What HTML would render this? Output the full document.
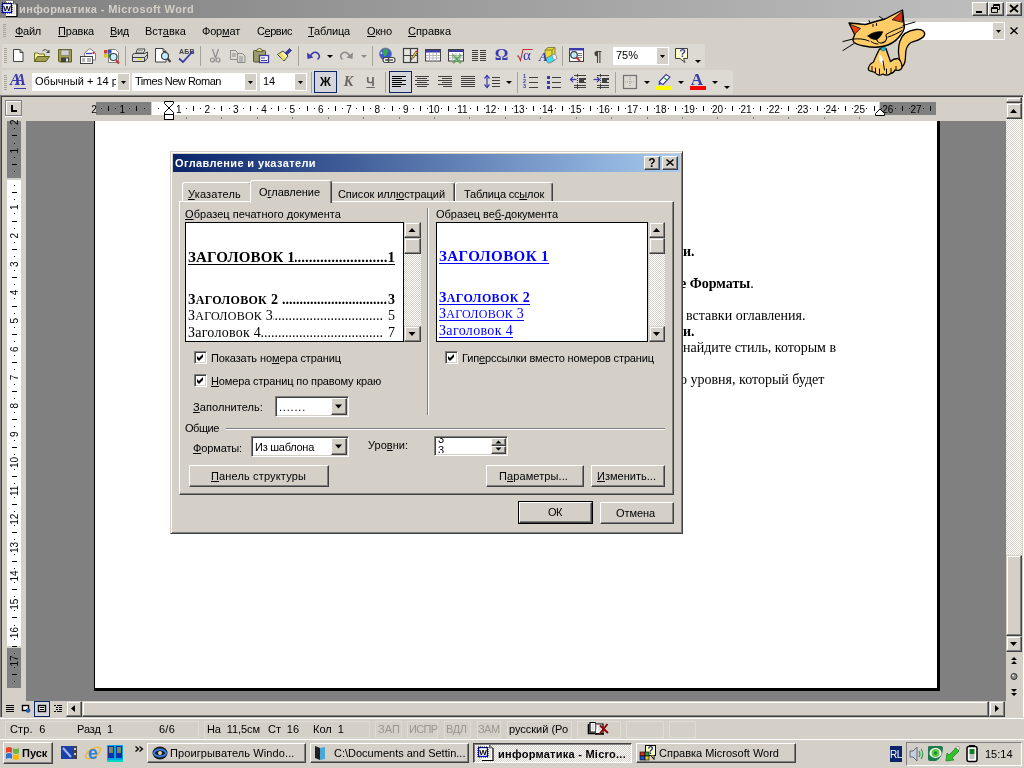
<!DOCTYPE html>
<html lang="ru">
<head>
<meta charset="utf-8">
<title>информатика - Microsoft Word</title>
<style>
*{box-sizing:border-box;margin:0;padding:0}
html,body{width:1024px;height:768px;overflow:hidden;background:#D4D0C8}
body{will-change:transform;position:relative;font-family:"Liberation Sans",sans-serif;font-size:11px;color:#000;line-height:1}
.a{position:absolute}
.t{position:absolute;white-space:nowrap;line-height:13px;height:13px}
u{text-decoration:underline;text-underline-offset:1px}
.btn{position:absolute;background:#D4D0C8;border:1px solid;border-color:#fff #404040 #404040 #fff;box-shadow:inset -1px -1px #808080,inset 1px 1px #D4D0C8;text-align:center;white-space:nowrap}
.sunk{position:absolute;background:#fff;border:1px solid;border-color:#808080 #fff #fff #808080;box-shadow:inset 1px 1px #404040,inset -1px -1px #D4D0C8}
.sb{position:absolute;background:#D4D0C8;border:1px solid;border-color:#D4D0C8 #404040 #404040 #D4D0C8;box-shadow:inset -1px -1px #808080,inset 1px 1px #fff}
.track{position:absolute;background-color:#fff;background-image:linear-gradient(45deg,#D4D0C8 25%,transparent 25%,transparent 75%,#D4D0C8 75%),linear-gradient(45deg,#D4D0C8 25%,transparent 25%,transparent 75%,#D4D0C8 75%);background-size:2px 2px;background-position:0 0,1px 1px}
.sep{position:absolute;width:1px;background:#A6A398}
.tb{position:absolute;background:#DDDAD3;border-radius:2px}
.serif{font-family:"Liberation Serif",serif}
.pan{position:absolute;top:721px;height:17px;border:1px solid #DFDCD5;}
.st{position:absolute;top:723px;white-space:nowrap;line-height:13px;font-size:11px}
.task{position:absolute;top:744px;height:20px;font-size:11px;line-height:18px;white-space:nowrap;overflow:hidden}
svg{position:absolute;overflow:visible}
</style>
</head>
<body>
<!-- title bar -->
<div class="a" style="left:0px;top:0px;width:1024px;height:18px;background:linear-gradient(90deg,#808080,#C0C0C0)"></div>
<svg style="left:1px;top:1px" width="18" height="18" viewBox="0 0 18 18"><g transform="translate(-1,-1)"><path d="M6 1h7.500l3 3v12h-10.500z" fill="#fff"/><path d="M13.500 1l3 3h-3z" fill="#D4D0C8" stroke="#000" stroke-width=".6"/><path d="M17 4v12.500h-11" fill="none" stroke="#000" stroke-width="1.200"/><path d="M12 7h3M12 9h3M12 11h3M8 13h7" stroke="#B8B8B8" stroke-width=".8"/></g><rect x="1" y="2" width="10" height="10" fill="#0000E0"/><rect x="1" y="2" width="10" height="10" fill="none" stroke="#000" stroke-width="1" stroke-dasharray="1 1"/><rect x="2.200" y="3.200" width="7.600" height="7.600" fill="#fff"/><text x="6" y="10" font-family="Liberation Sans,sans-serif" font-weight="bold" font-size="8" fill="#000" text-anchor="middle">W</text></svg>
<div class="t" style="left:19px;top:3px;font-weight:bold;color:#D4D0C8;font-size:11px;letter-spacing:0.382px;">информатика - Microsoft Word</div>
<div class="btn" style="left:972px;top:2px;width:16px;height:14px;"></div>
<div class="btn" style="left:988px;top:2px;width:16px;height:14px;"></div>
<div class="btn" style="left:1006px;top:2px;width:16px;height:14px;"></div>
<svg style="left:972px;top:2px" width="16" height="14" viewBox="0 0 16 14"><rect x="4" y="9" width="6" height="2" fill="#000"/></svg>
<svg style="left:988px;top:2px" width="16" height="14" viewBox="0 0 16 14"><path d="M5.5 2.5h6v5h-6z M5 3.5h7" fill="none" stroke="#000"/><path d="M3.5 5.5h6v5h-6z" fill="#D4D0C8" stroke="#000"/><path d="M3 6.5h7" stroke="#000"/></svg>
<svg style="left:1006px;top:2px" width="16" height="14" viewBox="0 0 16 14"><path d="M4 3l8 7M12 3l-8 7" stroke="#000" stroke-width="1.8" fill="none"/></svg>
<!-- menu bar -->
<div class="a" style="left:3px;top:24px;width:3px;height:14px;background:repeating-linear-gradient(180deg,#A6A398 0,#A6A398 1px,transparent 1px,transparent 2px)"></div>
<div class="t" style="left:15px;top:24px;top:24.5px;letter-spacing:-0.266px;"><u>Ф</u>айл</div>
<div class="t" style="left:58px;top:24px;top:24.5px;letter-spacing:-0.195px;"><u>П</u>равка</div>
<div class="t" style="left:110px;top:24px;top:24.5px;letter-spacing:-0.307px;"><u>В</u>ид</div>
<div class="t" style="left:145px;top:24px;top:24.5px;letter-spacing:0.013px;">Вст<u>а</u>вка</div>
<div class="t" style="left:202px;top:24px;top:24.5px;letter-spacing:-0.182px;">Фор<u>м</u>ат</div>
<div class="t" style="left:257px;top:24px;top:24.5px;letter-spacing:-0.448px;">С<u>е</u>рвис</div>
<div class="t" style="left:308px;top:24px;top:24.5px;letter-spacing:-0.163px;"><u>Т</u>аблица</div>
<div class="t" style="left:367px;top:24px;top:24.5px;letter-spacing:-0.145px;"><u>О</u>кно</div>
<div class="t" style="left:408px;top:24px;top:24.5px;letter-spacing:-0.025px;"><u>С</u>правка</div>
<div class="a" style="left:860px;top:22px;width:145px;height:18px;background:#fff"></div>
<div class="a" style="left:993px;top:23px;width:11px;height:16px;background:#D4D0C8"></div>
<svg style="left:993px;top:23px" width="11" height="16" viewBox="0 0 11 16"><path d="M3 7h5l-2.5 3z" fill="#000"/></svg>
<svg style="left:1009px;top:26px" width="10" height="9" viewBox="0 0 10 9"><path d="M1.5 1.5l7 6.5M8.5 1.5l-7 6.5" stroke="#000" stroke-width="1.4" fill="none"/></svg>
<!-- toolbars -->
<div class="tb" style="left:2px;top:44px;width:703px;height:24px;"></div>
<div class="tb" style="left:2px;top:70px;width:731px;height:24px;"></div>
<div class="a" style="left:4px;top:48px;width:3px;height:16px;background:repeating-linear-gradient(180deg,#A6A398 0,#A6A398 1px,transparent 1px,transparent 2px)"></div>
<div class="a" style="left:4px;top:75px;width:3px;height:16px;background:repeating-linear-gradient(180deg,#A6A398 0,#A6A398 1px,transparent 1px,transparent 2px)"></div>
<div class="sep" style="left:125px;top:46px;width:1px;height:20px;"></div>
<div class="sep" style="left:200px;top:46px;width:1px;height:20px;"></div>
<div class="sep" style="left:298px;top:46px;width:1px;height:20px;"></div>
<div class="sep" style="left:372px;top:46px;width:1px;height:20px;"></div>
<div class="sep" style="left:562px;top:46px;width:1px;height:20px;"></div>
<div class="sep" style="left:311px;top:72px;width:1px;height:21px;"></div>
<div class="sep" style="left:385px;top:72px;width:1px;height:21px;"></div>
<div class="sep" style="left:517px;top:72px;width:1px;height:21px;"></div>
<div class="sep" style="left:615px;top:72px;width:1px;height:21px;"></div>
<div class="a" style="left:32px;top:73px;width:98px;height:18px;background:#fff"></div>
<div class="a" style="left:118px;top:74px;width:11px;height:16px;background:#D4D0C8"></div>
<div class="t" style="left:35px;top:75px;width:81px;overflow:hidden;letter-spacing:0.030px;">Обычный + 14 р</div>
<div class="a" style="left:132px;top:73px;width:125px;height:18px;background:#fff"></div>
<div class="a" style="left:245px;top:74px;width:11px;height:16px;background:#D4D0C8"></div>
<div class="t" style="left:135px;top:75px;letter-spacing:-0.475px;">Times New Roman</div>
<div class="a" style="left:260px;top:73px;width:47px;height:18px;background:#fff"></div>
<div class="a" style="left:295px;top:74px;width:11px;height:16px;background:#D4D0C8"></div>
<div class="t" style="left:263px;top:75px;letter-spacing:-0.125px;">14</div>
<div class="a" style="left:613px;top:47px;width:56px;height:18px;background:#fff"></div>
<div class="a" style="left:657px;top:48px;width:11px;height:16px;background:#D4D0C8"></div>
<div class="t" style="left:616px;top:49px;letter-spacing:-0.010px;">75%</div>
<svg style="left:121px;top:81px" width="5" height="3" viewBox="0 0 5 3"><path d="M0 0h5l-2.500 3z" fill="#000"/></svg>
<svg style="left:248px;top:81px" width="5" height="3" viewBox="0 0 5 3"><path d="M0 0h5l-2.500 3z" fill="#000"/></svg>
<svg style="left:298px;top:81px" width="5" height="3" viewBox="0 0 5 3"><path d="M0 0h5l-2.500 3z" fill="#000"/></svg>
<svg style="left:660px;top:55px" width="5" height="3" viewBox="0 0 5 3"><path d="M0 0h5l-2.500 3z" fill="#000"/></svg>
<div class="a" style="left:314px;top:71px;width:23px;height:22px;background:#D5D6DB;border:1px solid #0A246A"></div>
<div class="a" style="left:389px;top:71px;width:23px;height:22px;background:#D5D6DB;border:1px solid #0A246A"></div>
<!-- toolbar icons -->
<svg style="left:12px;top:48px" width="16" height="16" viewBox="0 0 16 16"><path d="M1.500 1.500h6.500l3 3v9h-9.500z" fill="#fff" stroke="#404040"/><path d="M8 1.500v3h3" fill="none" stroke="#404040"/></svg>
<svg style="left:34px;top:48px" width="16" height="16" viewBox="0 0 16 16"><path d="M0.500 13.500v-8.500h3.500l1 1h5.500v2.500" fill="#F4F0A0" stroke="#707030"/><path d="M0.500 13.500l3-5h12l-3.500 5z" fill="#A0A050" stroke="#606020"/><path d="M8.500 3q3-3 5.500 0.500" fill="none" stroke="#404040"/><path d="M15.500 1.500v3.500h-3.500z" fill="#404040"/></svg>
<svg style="left:58px;top:48px" width="16" height="16" viewBox="0 0 16 16"><path d="M0.500 1.500h13v12.500h-12l-1-1z" fill="#A0A050" stroke="#606020"/><rect x="3" y="2" width="8" height="5.500" fill="#D0D0D0" stroke="#707070" stroke-width=".6"/><rect x="3" y="9.500" width="8" height="4.500" fill="#404040"/><rect x="8" y="10.500" width="2" height="3" fill="#E8E8E8"/></svg>
<svg style="left:80px;top:48px" width="16" height="16" viewBox="0 0 16 16"><path d="M4.500 5l5.500-4.500l5.500 4.500v7h-11z" fill="#fff" stroke="#808080"/><path d="M6 5.500h6" stroke="#3A3AAA" stroke-width="1.300"/><rect x="12.500" y="4" width="2" height="2" fill="#C03030"/><rect x="0.500" y="8.500" width="12" height="7" fill="#fff" stroke="#404040"/><path d="M2 11h3M2 13h3M7 11h4M7 13h4" stroke="#707070"/></svg>
<svg style="left:104px;top:48px" width="16" height="16" viewBox="0 0 16 16"><path d="M4.500 1.500h7l3 3v10h-10z" fill="#fff" stroke="#808080"/><rect x="0" y="2" width="3.500" height="3.500" fill="#D04030"/><rect x="4" y="2" width="3.500" height="3.500" fill="#3050C0"/><rect x="0" y="6" width="3.500" height="3.500" fill="#E0C030"/><rect x="4" y="6" width="3.500" height="3.500" fill="#30A040"/><circle cx="9.500" cy="9" r="3.500" fill="#C8F4FF" stroke="#404040" stroke-width="1.200"/><path d="M12 12l3 3.500" stroke="#D03030" stroke-width="2"/></svg>
<svg style="left:132px;top:48px" width="16" height="16" viewBox="0 0 16 16"><path d="M4 5l1.500-4h7.500l-1.500 4z" fill="#fff" stroke="#404040"/><path d="M6 2.500h5M5.500 4h5" stroke="#808080" stroke-width=".7"/><path d="M0.500 7.500q0-2 2-2h10l3-1.500v6l-3 3.500h-12z" fill="#D8D8D8" stroke="#404040"/><path d="M0.500 9.500h12l3-3M12.500 9.500v4" fill="none" stroke="#404040"/><rect x="6" y="10.500" width="4" height="1.500" fill="#E8E020"/></svg>
<svg style="left:155px;top:48px" width="16" height="16" viewBox="0 0 16 16"><path d="M0.500 0.500h7.500l3 3v10.500h-10.500z" fill="#fff" stroke="#404040"/><path d="M8 0.500v3h3" fill="none" stroke="#404040"/><circle cx="10" cy="8" r="3.500" fill="#C0F0FF" stroke="#404040" stroke-width="1.200"/><path d="M12.500 10.500l3 3.500" stroke="#404040" stroke-width="2"/></svg>
<div class="t" style="left:179px;top:48px;font-size:7px;font-weight:bold;line-height:8px;height:8px;color:#404040;letter-spacing:0.2px">АБВ</div>
<svg style="left:178px;top:48px" width="16" height="16" viewBox="0 0 16 16"><path d="M1 10.500l4 3.500l10-11" fill="none" stroke="#3A3AAA" stroke-width="1.800"/></svg>
<svg style="left:208px;top:48px" width="16" height="16" viewBox="0 0 16 16"><path d="M4.500 1l3 9M10.500 1l-3 9" stroke="#8C8C8C" stroke-width="1.200" fill="none"/><circle cx="4.500" cy="12" r="2" fill="none" stroke="#8C8C8C" stroke-width="1.200"/><circle cx="10" cy="12" r="2" fill="none" stroke="#8C8C8C" stroke-width="1.200"/></svg>
<svg style="left:229px;top:48px" width="16" height="16" viewBox="0 0 16 16"><path d="M1.500 2.500h5l2 2v7h-7z" fill="none" stroke="#8C8C8C"/><path d="M3 6h4M3 8h4" stroke="#8C8C8C"/><path d="M8.500 5.500h5l2.500 2.500v6.500h-7.500z" fill="#DDDAD3" stroke="#8C8C8C"/><path d="M10 9h4M10 11h4M10 13h4" stroke="#8C8C8C"/></svg>
<svg style="left:253px;top:48px" width="16" height="16" viewBox="0 0 16 16"><rect x="0.500" y="2.500" width="12" height="11.500" rx="1" fill="#9C9C68" stroke="#505030"/><path d="M3.500 3.500q0-3 3-3t3 3z" fill="#E0D890" stroke="#505030" stroke-width=".8"/><rect x="6.500" y="7.500" width="9" height="7" fill="#fff" stroke="#3A3AAA" stroke-width="1.300"/><path d="M8 10h4M8 12.500h6" stroke="#3A3AAA"/></svg>
<svg style="left:276px;top:48px" width="16" height="16" viewBox="0 0 16 16"><path d="M9 5l4.500-4.500l2 2l-4.500 4.500z" fill="#3A3AAA" stroke="#202060" stroke-width=".6"/><path d="M1.500 6.500l5.500-3.500l5 5l-4 5z" fill="#F8F4C0" stroke="#404040"/><path d="M4 5l5 5.500M3 6l4.500 6" stroke="#E8D840" stroke-width="1.200"/><path d="M0.500 14.500h3l2-1.500" fill="none" stroke="#E8E040" stroke-width="1.200" stroke-dasharray="1.500 1"/></svg>
<svg style="left:306px;top:48px" width="16" height="16" viewBox="0 0 16 16"><path d="M4 8.500q3.500-6.500 8-3q3 3-0.500 6" fill="none" stroke="#3A3AAA" stroke-width="1.600"/><path d="M1 4.500l0.500 6.500l6-1.500z" fill="#3A3AAA"/></svg>
<svg style="left:327px;top:55px" width="6" height="3" viewBox="0 0 6 3"><path d="M0 0h6l-3 3z" fill="#000"/></svg>
<svg style="left:340px;top:48px" width="16" height="16" viewBox="0 0 16 16"><path d="M10 8.500q-3.500-6.500-8-3q-3 3 0.500 6" fill="none" stroke="#8C8C8C" stroke-width="1.600"/><path d="M13 4.500l-0.500 6.500l-6-1.500z" fill="#8C8C8C"/></svg>
<svg style="left:361px;top:55px" width="6" height="3" viewBox="0 0 6 3"><path d="M0 0h6l-3 3z" fill="#8C8C8C"/></svg>
<svg style="left:379px;top:47px" width="16" height="16" viewBox="0 0 16 16"><circle cx="6.500" cy="7" r="6" fill="#3858D8" stroke="#808080" stroke-width=".8"/><path d="M4 3q3-2 5 0q1 3-1 4q-1 3-3 2q-2-3-1-6z" fill="#38A848"/><path d="M1.500 5q2-1 2 1.500q-1 1.500-2 0z" fill="#fff" opacity=".7"/><rect x="4" y="10.500" width="7" height="5" rx="2.500" fill="#fff" stroke="#404040" stroke-width="1.100"/><rect x="9" y="10.500" width="7" height="5" rx="2.500" fill="#fff" stroke="#404040" stroke-width="1.100"/><path d="M6 13h8" stroke="#404040" stroke-width="1.400"/></svg>
<svg style="left:403px;top:48px" width="16" height="16" viewBox="0 0 16 16"><rect x="0.500" y="0.500" width="14" height="14" fill="#E8E6E0" stroke="#404040" stroke-width="1.200"/><path d="M7.500 0.500v14M0.500 7.500h14" stroke="#404040" stroke-width="1.200"/><path d="M8 12l1-3l4-6l1.500 1l-4 6z" fill="#F0D030" stroke="#404040" stroke-width=".7"/><path d="M13 3l1.500 1" stroke="#D03030" stroke-width="1.500"/></svg>
<svg style="left:425px;top:48px" width="16" height="16" viewBox="0 0 16 16"><rect x="0.500" y="1.500" width="15" height="11.500" fill="#fff" stroke="#404040"/><rect x="1" y="2" width="14" height="2.500" fill="#3A3AAA"/><path d="M1 7.500h14M1 10h14M4.500 5v8M8 5v8M11.500 5v8" stroke="#B8B8C0" stroke-width="1"/></svg>
<svg style="left:448px;top:48px" width="16" height="16" viewBox="0 0 16 16"><rect x="0.500" y="1.500" width="15" height="11.500" fill="#fff" stroke="#404040"/><rect x="1" y="2" width="14" height="2" fill="#3A3AAA"/><path d="M1 7.500h14M1 10h14M4.500 5v8M8 5v8M11.500 5v8" stroke="#B8B8C0"/><path d="M5 7l8 8M13 7l-8 8" stroke="#48A048" stroke-width="2.600" stroke-dasharray="1 .5"/></svg>
<svg style="left:472px;top:48px" width="16" height="16" viewBox="0 0 16 16"><path d="M0 2.500h6M0 4.500h6M0 6.500h6M0 8.500h6M0 10.500h6M0 12.500h6M8 2.500h6M8 4.500h6M8 6.500h6M8 8.500h6M8 10.500h6M8 12.500h6" stroke="#404040"/></svg>
<div class="t serif" style="left:494px;top:46px;font-size:17px;line-height:18px;height:18px;font-weight:bold;color:#3A3AAA;width:15px;text-align:center">Ω</div>
<svg style="left:517px;top:48px" width="16" height="16" viewBox="0 0 16 16"><path d="M0 8h1.500l2 4.500l2.500-11h9.500" fill="none" stroke="#C03030" stroke-width="1.100"/></svg>
<div class="t serif" style="left:523px;top:47px;font-size:15px;line-height:16px;height:16px;color:#3A3AAA">α</div>
<svg style="left:540px;top:47px" width="16" height="16" viewBox="0 0 16 16"><path d="M5 3l3-2.500h7v8l-3 2.500h-7z" fill="#E8D838" stroke="#707030" stroke-width=".8"/><path d="M5 3h7l3-2.500M12 3v8" fill="none" stroke="#707030" stroke-width=".8"/><rect x="6" y="9" width="10" height="6" rx="3" fill="#40E0F0" stroke="#707070" stroke-width=".7" transform="rotate(-28 11 12)"/><ellipse cx="14.500" cy="10" rx="2" ry="3" fill="#E8F0F0" stroke="#707070" stroke-width=".6" transform="rotate(-28 14.500 10)"/></svg>
<div class="t serif" style="left:539px;top:50px;font-size:13px;line-height:13px;font-weight:bold;font-style:italic;color:#3A3AAA">A</div>
<svg style="left:569px;top:48px" width="16" height="16" viewBox="0 0 16 16"><rect x="0.500" y="0.500" width="14" height="13" fill="#fff" stroke="#404040"/><rect x="0" y="0" width="15" height="2.500" fill="#3A3AAA"/><path d="M9 5.500h4M9 7.500h4M9 9.500h4" stroke="#808080"/><circle cx="5" cy="7" r="3.300" fill="#B8F0FF" stroke="#404040" stroke-width="1.200"/><path d="M7.500 9.500l3.500 3.500" stroke="#D83030" stroke-width="2"/></svg>
<div class="t" style="left:594px;top:47px;font-size:14px;line-height:18px;height:18px;color:#404040;font-weight:bold">¶</div>
<svg style="left:675px;top:48px" width="16" height="16" viewBox="0 0 16 16"><path d="M0.500 0.500h12v10h-4l1.500 4l-5-4h-4.500z" fill="#FFFFD0" stroke="#404040"/></svg>
<div class="t" style="left:676px;top:48px;width:13px;text-align:center;font-size:11px;line-height:11px;font-weight:bold;color:#3A3AAA">?</div>
<svg style="left:695px;top:60px" width="6" height="3" viewBox="0 0 6 3"><path d="M0 0h6l-3 3z" fill="#000"/></svg>
<div class="t serif" style="left:10px;top:72px;font-size:16px;line-height:16px;height:16px;font-weight:bold;font-style:italic;color:#3A3AAA;letter-spacing:-5.500px">AA</div>
<div class="a" style="left:14px;top:88px;width:12px;height:1px;background:#3A3AAA"></div>
<div class="t" style="left:314px;top:75px;width:23px;text-align:center;font-size:12px;line-height:14px;height:14px;font-weight:bold">Ж</div>
<div class="t serif" style="left:337px;top:75px;width:23px;text-align:center;font-size:14px;line-height:14px;height:14px;font-weight:bold;font-style:italic;color:#686868">К</div>
<div class="t" style="left:359px;top:75px;width:23px;text-align:center;font-size:12px;line-height:14px;height:14px;font-weight:bold;color:#686868;text-decoration:underline;text-underline-offset:1px">Ч</div>
<svg style="left:392px;top:76px" width="16" height="12" viewBox="0 0 16 12"><rect x="0" y="0" width="14" height="1" fill="#000"/><rect x="0" y="2" width="10" height="1" fill="#000"/><rect x="0" y="4" width="14" height="1" fill="#000"/><rect x="0" y="6" width="10" height="1" fill="#000"/><rect x="0" y="8" width="14" height="1" fill="#000"/><rect x="0" y="10" width="9" height="1" fill="#000"/></svg>
<svg style="left:415px;top:76px" width="16" height="12" viewBox="0 0 16 12"><rect x="0" y="0" width="14" height="1" fill="#404040"/><rect x="2" y="2" width="10" height="1" fill="#404040"/><rect x="0" y="4" width="14" height="1" fill="#404040"/><rect x="2" y="6" width="10" height="1" fill="#404040"/><rect x="0" y="8" width="14" height="1" fill="#404040"/><rect x="2" y="10" width="10" height="1" fill="#404040"/></svg>
<svg style="left:438px;top:76px" width="16" height="12" viewBox="0 0 16 12"><rect x="0" y="0" width="14" height="1" fill="#404040"/><rect x="4" y="2" width="10" height="1" fill="#404040"/><rect x="0" y="4" width="14" height="1" fill="#404040"/><rect x="4" y="6" width="10" height="1" fill="#404040"/><rect x="0" y="8" width="14" height="1" fill="#404040"/><rect x="5" y="10" width="9" height="1" fill="#404040"/></svg>
<svg style="left:461px;top:76px" width="16" height="12" viewBox="0 0 16 12"><rect x="0" y="0" width="14" height="1" fill="#404040"/><rect x="0" y="2" width="14" height="1" fill="#404040"/><rect x="0" y="4" width="14" height="1" fill="#404040"/><rect x="0" y="6" width="14" height="1" fill="#404040"/><rect x="0" y="8" width="14" height="1" fill="#404040"/><rect x="0" y="10" width="14" height="1" fill="#404040"/></svg>
<svg style="left:484px;top:74px" width="16" height="16" viewBox="0 0 16 16"><path d="M3 1.500v12" stroke="#3A3AAA" stroke-width="1.200"/><path d="M0.500 4.500l2.500-3l2.500 3M0.500 10.500l2.500 3l2.500-3" fill="none" stroke="#3A3AAA" stroke-width="1.200"/><path d="M8 3.500h8M8 6.500h8M8 9.500h8M8 12.500h8" stroke="#404040"/></svg>
<svg style="left:506px;top:81px" width="6" height="3" viewBox="0 0 6 3"><path d="M0 0h6l-3 3z" fill="#000"/></svg>
<svg style="left:523px;top:75px" width="16" height="16" viewBox="0 0 16 16"><path d="M6 2.500h9M6 7.500h9M6 12.500h9" stroke="#404040"/></svg>
<div class="t" style="left:523px;top:74px;font-size:5.500px;line-height:5px;height:16px;width:5px;white-space:normal;font-weight:bold;color:#3A3AAA">1 2 3</div>
<svg style="left:546px;top:75px" width="16" height="16" viewBox="0 0 16 16"><rect x="1" y="1" width="3" height="3" fill="#3A3AAA"/><rect x="1" y="6" width="3" height="3" fill="#3A3AAA"/><rect x="1" y="11" width="3" height="3" fill="#3A3AAA"/><path d="M6 2.500h9M6 7.500h9M6 12.500h9" stroke="#404040"/></svg>
<svg style="left:570px;top:74px" width="16" height="16" viewBox="0 0 16 16"><path d="M0.500 5.500h6" stroke="#3A3AAA" stroke-width="1.200"/><path d="M3 3l-2.500 2.500l2.500 2.500" fill="none" stroke="#3A3AAA" stroke-width="1.200"/><path d="M7.500 0v16" stroke="#404040" stroke-dasharray="1 1"/><path d="M4 1.500h12M9 4.500h7M9 6.500h5M9 8.500h7M4 11.500h12M4 13.500h12" stroke="#404040"/><rect x="9" y="4" width="7" height="2" fill="#404040"/><rect x="9" y="7" width="5" height="2" fill="#404040"/></svg>
<svg style="left:593px;top:74px" width="16" height="16" viewBox="0 0 16 16"><path d="M0.500 5.500h6" stroke="#3A3AAA" stroke-width="1.200"/><path d="M4 3l2.500 2.500l-2.500 2.500" fill="none" stroke="#3A3AAA" stroke-width="1.200"/><path d="M7.500 0v16" stroke="#404040" stroke-dasharray="1 1"/><path d="M4 1.500h12M9 4.500h7M9 6.500h5M9 8.500h7M4 11.500h12M4 13.500h12" stroke="#404040"/><rect x="9" y="4" width="7" height="2" fill="#404040"/><rect x="9" y="7" width="5" height="2" fill="#404040"/></svg>
<svg style="left:623px;top:75px" width="16" height="16" viewBox="0 0 16 16"><rect x="0.500" y="0.500" width="13" height="13" fill="none" stroke="#707070" stroke-width="1.200"/><path d="M7 2v10M2 7h10" stroke="#A0A0A0" stroke-dasharray="1 1"/></svg>
<svg style="left:644px;top:81px" width="6" height="3" viewBox="0 0 6 3"><path d="M0 0h6l-3 3z" fill="#000"/></svg>
<svg style="left:656px;top:74px" width="16" height="16" viewBox="0 0 16 16"><path d="M3 8l7-7.500l4 2.500l-7 7.500z" fill="#fff" stroke="#3A3AAA" stroke-width="1.100"/><path d="M8 4l3 2" stroke="#30A040" stroke-width="1.500"/><path d="M3 8l-0.500 3l3.500-1z" fill="#3A3AAA"/></svg>
<div class="a" style="left:656px;top:86px;width:16px;height:4px;background:#FFFF00"></div>
<svg style="left:678px;top:81px" width="6" height="3" viewBox="0 0 6 3"><path d="M0 0h6l-3 3z" fill="#000"/></svg>
<div class="t serif" style="left:689px;top:71px;width:16px;text-align:center;font-size:17px;line-height:17px;height:17px;font-weight:bold;color:#3A3AAA">A</div>
<div class="a" style="left:690px;top:86px;width:16px;height:4px;background:#FF0000"></div>
<svg style="left:712px;top:81px" width="6" height="3" viewBox="0 0 6 3"><path d="M0 0h6l-3 3z" fill="#000"/></svg>
<svg style="left:724px;top:86px" width="6" height="3" viewBox="0 0 6 3"><path d="M0 0h6l-3 3z" fill="#000"/></svg>
<!-- document area -->
<div class="a" style="left:0px;top:95px;width:1024px;height:623px;background:#808080"></div>
<div class="a" style="left:1px;top:96px;width:1023px;height:622px;background:#404040"></div>
<div class="a" style="left:2px;top:97px;width:1022px;height:620px;background:#D4D0C8"></div>
<div class="a" style="left:1023px;top:95px;width:1px;height:623px;background:#fff"></div>
<div class="a" style="left:0px;top:717px;width:1024px;height:1px;background:#D4D0C8"></div>
<div class="a" style="left:0px;top:718px;width:1024px;height:1px;background:#fff"></div>
<div class="a" style="left:26px;top:121px;width:980px;height:580px;background:#808080"></div>
<div class="a" style="left:94px;top:121px;width:846px;height:570px;background:#000"></div>
<div class="a" style="left:95px;top:121px;width:842px;height:567px;background:#fff"></div>
<div class="a" style="left:5px;top:100px;width:17px;height:16px;border:1px solid #808080;box-shadow:inset 1px 1px #fff;background:#D4D0C8"></div>
<div class="a" style="left:5px;top:116px;width:17px;height:1px;background:#fff"></div>
<svg style="left:5px;top:100px" width="17" height="16" viewBox="0 0 17 16"><path d="M7 5v6h5" stroke="#000" stroke-width="2" fill="none"/></svg>
<div class="a" style="left:96px;top:102px;width:55px;height:13px;background:#808080"></div>
<div class="a" style="left:152px;top:102px;width:727px;height:13px;background:#fff"></div>
<div class="a" style="left:880px;top:102px;width:56px;height:13px;background:#808080"></div>
<svg style="left:96px;top:102px" width="840" height="13" viewBox="0 0 840 13"><g font-family="Liberation Sans,sans-serif" font-size="10" fill="#000"><text x="-2.1" y="10.5" text-anchor="middle">2</text><rect x="5" y="6" width="1" height="1" fill="#000"/><rect x="12" y="4" width="1" height="5" fill="#000"/><rect x="19" y="6" width="1" height="1" fill="#000"/><text x="26.2" y="10.5" text-anchor="middle">1</text><rect x="33" y="6" width="1" height="1" fill="#000"/><rect x="40" y="4" width="1" height="5" fill="#000"/><rect x="48" y="6" width="1" height="1" fill="#000"/><rect x="62" y="6" width="1" height="1" fill="#000"/><text x="82.9" y="10.5" text-anchor="middle">1</text><rect x="90" y="6" width="1" height="1" fill="#000"/><rect x="97" y="4" width="1" height="5" fill="#000"/><rect x="104" y="6" width="1" height="1" fill="#000"/><text x="111.3" y="10.5" text-anchor="middle">2</text><rect x="118" y="6" width="1" height="1" fill="#000"/><rect x="125" y="4" width="1" height="5" fill="#000"/><rect x="133" y="6" width="1" height="1" fill="#000"/><text x="139.7" y="10.5" text-anchor="middle">3</text><rect x="147" y="6" width="1" height="1" fill="#000"/><rect x="154" y="4" width="1" height="5" fill="#000"/><rect x="161" y="6" width="1" height="1" fill="#000"/><text x="168.0" y="10.5" text-anchor="middle">4</text><rect x="175" y="6" width="1" height="1" fill="#000"/><rect x="182" y="4" width="1" height="5" fill="#000"/><rect x="189" y="6" width="1" height="1" fill="#000"/><text x="196.4" y="10.5" text-anchor="middle">5</text><rect x="203" y="6" width="1" height="1" fill="#000"/><rect x="211" y="4" width="1" height="5" fill="#000"/><rect x="218" y="6" width="1" height="1" fill="#000"/><text x="224.7" y="10.5" text-anchor="middle">6</text><rect x="232" y="6" width="1" height="1" fill="#000"/><rect x="239" y="4" width="1" height="5" fill="#000"/><rect x="246" y="6" width="1" height="1" fill="#000"/><text x="253.1" y="10.5" text-anchor="middle">7</text><rect x="260" y="6" width="1" height="1" fill="#000"/><rect x="267" y="4" width="1" height="5" fill="#000"/><rect x="274" y="6" width="1" height="1" fill="#000"/><text x="281.4" y="10.5" text-anchor="middle">8</text><rect x="288" y="6" width="1" height="1" fill="#000"/><rect x="296" y="4" width="1" height="5" fill="#000"/><rect x="303" y="6" width="1" height="1" fill="#000"/><text x="309.8" y="10.5" text-anchor="middle">9</text><rect x="317" y="6" width="1" height="1" fill="#000"/><rect x="324" y="4" width="1" height="5" fill="#000"/><rect x="331" y="6" width="1" height="1" fill="#000"/><text x="338.1" y="10.5" text-anchor="middle">10</text><rect x="345" y="6" width="1" height="1" fill="#000"/><rect x="352" y="4" width="1" height="5" fill="#000"/><rect x="359" y="6" width="1" height="1" fill="#000"/><text x="366.5" y="10.5" text-anchor="middle">11</text><rect x="374" y="6" width="1" height="1" fill="#000"/><rect x="381" y="4" width="1" height="5" fill="#000"/><rect x="388" y="6" width="1" height="1" fill="#000"/><text x="394.8" y="10.5" text-anchor="middle">12</text><rect x="402" y="6" width="1" height="1" fill="#000"/><rect x="409" y="4" width="1" height="5" fill="#000"/><rect x="416" y="6" width="1" height="1" fill="#000"/><text x="423.1" y="10.5" text-anchor="middle">13</text><rect x="430" y="6" width="1" height="1" fill="#000"/><rect x="437" y="4" width="1" height="5" fill="#000"/><rect x="444" y="6" width="1" height="1" fill="#000"/><text x="451.5" y="10.5" text-anchor="middle">14</text><rect x="459" y="6" width="1" height="1" fill="#000"/><rect x="466" y="4" width="1" height="5" fill="#000"/><rect x="473" y="6" width="1" height="1" fill="#000"/><text x="479.9" y="10.5" text-anchor="middle">15</text><rect x="487" y="6" width="1" height="1" fill="#000"/><rect x="494" y="4" width="1" height="5" fill="#000"/><rect x="501" y="6" width="1" height="1" fill="#000"/><text x="508.2" y="10.5" text-anchor="middle">16</text><rect x="515" y="6" width="1" height="1" fill="#000"/><rect x="522" y="4" width="1" height="5" fill="#000"/><rect x="529" y="6" width="1" height="1" fill="#000"/><text x="536.6" y="10.5" text-anchor="middle">17</text><rect x="544" y="6" width="1" height="1" fill="#000"/><rect x="551" y="4" width="1" height="5" fill="#000"/><rect x="558" y="6" width="1" height="1" fill="#000"/><text x="564.9" y="10.5" text-anchor="middle">18</text><rect x="572" y="6" width="1" height="1" fill="#000"/><rect x="579" y="4" width="1" height="5" fill="#000"/><rect x="586" y="6" width="1" height="1" fill="#000"/><text x="593.2" y="10.5" text-anchor="middle">19</text><rect x="600" y="6" width="1" height="1" fill="#000"/><rect x="607" y="4" width="1" height="5" fill="#000"/><rect x="615" y="6" width="1" height="1" fill="#000"/><text x="621.6" y="10.5" text-anchor="middle">20</text><rect x="629" y="6" width="1" height="1" fill="#000"/><rect x="636" y="4" width="1" height="5" fill="#000"/><rect x="643" y="6" width="1" height="1" fill="#000"/><text x="650.0" y="10.5" text-anchor="middle">21</text><rect x="657" y="6" width="1" height="1" fill="#000"/><rect x="664" y="4" width="1" height="5" fill="#000"/><rect x="671" y="6" width="1" height="1" fill="#000"/><text x="678.3" y="10.5" text-anchor="middle">22</text><rect x="685" y="6" width="1" height="1" fill="#000"/><rect x="692" y="4" width="1" height="5" fill="#000"/><rect x="700" y="6" width="1" height="1" fill="#000"/><text x="706.7" y="10.5" text-anchor="middle">23</text><rect x="714" y="6" width="1" height="1" fill="#000"/><rect x="721" y="4" width="1" height="5" fill="#000"/><rect x="728" y="6" width="1" height="1" fill="#000"/><text x="735.0" y="10.5" text-anchor="middle">24</text><rect x="742" y="6" width="1" height="1" fill="#000"/><rect x="749" y="4" width="1" height="5" fill="#000"/><rect x="756" y="6" width="1" height="1" fill="#000"/><text x="763.4" y="10.5" text-anchor="middle">25</text><rect x="770" y="6" width="1" height="1" fill="#000"/><rect x="778" y="4" width="1" height="5" fill="#000"/><rect x="785" y="6" width="1" height="1" fill="#000"/><text x="791.7" y="10.5" text-anchor="middle">26</text><rect x="799" y="6" width="1" height="1" fill="#000"/><rect x="806" y="4" width="1" height="5" fill="#000"/><rect x="813" y="6" width="1" height="1" fill="#000"/><text x="820.1" y="10.5" text-anchor="middle">27</text><rect x="827" y="6" width="1" height="1" fill="#000"/><rect x="834" y="4" width="1" height="5" fill="#000"/></g></svg>
<svg style="left:0px;top:0px" width="1024" height="120" viewBox="0 0 1024 120"><rect x="186" y="117" width="1" height="2" fill="#808080"/><rect x="221" y="117" width="1" height="2" fill="#808080"/><rect x="257" y="117" width="1" height="2" fill="#808080"/><rect x="292" y="117" width="1" height="2" fill="#808080"/><rect x="328" y="117" width="1" height="2" fill="#808080"/><rect x="363" y="117" width="1" height="2" fill="#808080"/><rect x="399" y="117" width="1" height="2" fill="#808080"/><rect x="434" y="117" width="1" height="2" fill="#808080"/><rect x="469" y="117" width="1" height="2" fill="#808080"/><rect x="505" y="117" width="1" height="2" fill="#808080"/><rect x="540" y="117" width="1" height="2" fill="#808080"/><rect x="576" y="117" width="1" height="2" fill="#808080"/><rect x="611" y="117" width="1" height="2" fill="#808080"/><rect x="647" y="117" width="1" height="2" fill="#808080"/><rect x="682" y="117" width="1" height="2" fill="#808080"/><rect x="717" y="117" width="1" height="2" fill="#808080"/><rect x="753" y="117" width="1" height="2" fill="#808080"/><rect x="788" y="117" width="1" height="2" fill="#808080"/><rect x="824" y="117" width="1" height="2" fill="#808080"/><rect x="859" y="117" width="1" height="2" fill="#808080"/></svg>
<svg style="left:163px;top:97px" width="12" height="24" viewBox="0 0 12 24"><path d="M1.5 4.5h9v2l-4.5 4.5l-4.5-4.5z" fill="#fff" stroke="#000"/><path d="M1.5 17.5v-2l4.5-4.5l4.5 4.5v2z" fill="#fff" stroke="#000"/><rect x="1.5" y="17.5" width="9" height="5" fill="#fff" stroke="#000"/></svg>
<svg style="left:874px;top:104px" width="12" height="12" viewBox="0 0 12 12"><path d="M1.5 11.5v-2l4.5-4.5l4.5 4.5v2z" fill="#fff" stroke="#000"/></svg>
<div class="a" style="left:7px;top:121px;width:14px;height:57px;background:#808080"></div>
<div class="a" style="left:7px;top:180px;width:14px;height:466px;background:#fff"></div>
<div class="a" style="left:7px;top:648px;width:14px;height:40px;background:#808080"></div>
<svg style="left:7px;top:121px" width="14" height="567" viewBox="0 0 14 567"><g font-family="Liberation Sans,sans-serif" font-size="10" fill="#000"><text transform="translate(10.5,1.3) rotate(-90)" text-anchor="middle">2</text><rect x="7" y="7" width="1" height="1" fill="#000"/><rect x="5" y="14" width="5" height="1" fill="#000"/><rect x="7" y="22" width="1" height="1" fill="#000"/><text transform="translate(10.5,29.7) rotate(-90)" text-anchor="middle">1</text><rect x="7" y="36" width="1" height="1" fill="#000"/><rect x="5" y="43" width="5" height="1" fill="#000"/><rect x="7" y="50" width="1" height="1" fill="#000"/><rect x="7" y="64" width="1" height="1" fill="#000"/><rect x="5" y="71" width="5" height="1" fill="#000"/><rect x="7" y="78" width="1" height="1" fill="#000"/><text transform="translate(10.5,86.3) rotate(-90)" text-anchor="middle">1</text><rect x="7" y="92" width="1" height="1" fill="#000"/><rect x="5" y="100" width="5" height="1" fill="#000"/><rect x="7" y="107" width="1" height="1" fill="#000"/><text transform="translate(10.5,114.7) rotate(-90)" text-anchor="middle">2</text><rect x="7" y="121" width="1" height="1" fill="#000"/><rect x="5" y="128" width="5" height="1" fill="#000"/><rect x="7" y="135" width="1" height="1" fill="#000"/><text transform="translate(10.5,143.1) rotate(-90)" text-anchor="middle">3</text><rect x="7" y="149" width="1" height="1" fill="#000"/><rect x="5" y="156" width="5" height="1" fill="#000"/><rect x="7" y="163" width="1" height="1" fill="#000"/><text transform="translate(10.5,171.4) rotate(-90)" text-anchor="middle">4</text><rect x="7" y="177" width="1" height="1" fill="#000"/><rect x="5" y="185" width="5" height="1" fill="#000"/><rect x="7" y="192" width="1" height="1" fill="#000"/><text transform="translate(10.5,199.8) rotate(-90)" text-anchor="middle">5</text><rect x="7" y="206" width="1" height="1" fill="#000"/><rect x="5" y="213" width="5" height="1" fill="#000"/><rect x="7" y="220" width="1" height="1" fill="#000"/><text transform="translate(10.5,228.1) rotate(-90)" text-anchor="middle">6</text><rect x="7" y="234" width="1" height="1" fill="#000"/><rect x="5" y="241" width="5" height="1" fill="#000"/><rect x="7" y="248" width="1" height="1" fill="#000"/><text transform="translate(10.5,256.5) rotate(-90)" text-anchor="middle">7</text><rect x="7" y="263" width="1" height="1" fill="#000"/><rect x="5" y="270" width="5" height="1" fill="#000"/><rect x="7" y="277" width="1" height="1" fill="#000"/><text transform="translate(10.5,284.8) rotate(-90)" text-anchor="middle">8</text><rect x="7" y="291" width="1" height="1" fill="#000"/><rect x="5" y="298" width="5" height="1" fill="#000"/><rect x="7" y="305" width="1" height="1" fill="#000"/><text transform="translate(10.5,313.1) rotate(-90)" text-anchor="middle">9</text><rect x="7" y="319" width="1" height="1" fill="#000"/><rect x="5" y="326" width="5" height="1" fill="#000"/><rect x="7" y="333" width="1" height="1" fill="#000"/><text transform="translate(10.5,341.5) rotate(-90)" text-anchor="middle">10</text><rect x="7" y="348" width="1" height="1" fill="#000"/><rect x="5" y="355" width="5" height="1" fill="#000"/><rect x="7" y="362" width="1" height="1" fill="#000"/><text transform="translate(10.5,369.9) rotate(-90)" text-anchor="middle">11</text><rect x="7" y="376" width="1" height="1" fill="#000"/><rect x="5" y="383" width="5" height="1" fill="#000"/><rect x="7" y="390" width="1" height="1" fill="#000"/><text transform="translate(10.5,398.2) rotate(-90)" text-anchor="middle">12</text><rect x="7" y="404" width="1" height="1" fill="#000"/><rect x="5" y="411" width="5" height="1" fill="#000"/><rect x="7" y="418" width="1" height="1" fill="#000"/><text transform="translate(10.5,426.5) rotate(-90)" text-anchor="middle">13</text><rect x="7" y="433" width="1" height="1" fill="#000"/><rect x="5" y="440" width="5" height="1" fill="#000"/><rect x="7" y="447" width="1" height="1" fill="#000"/><text transform="translate(10.5,454.9) rotate(-90)" text-anchor="middle">14</text><rect x="7" y="461" width="1" height="1" fill="#000"/><rect x="5" y="468" width="5" height="1" fill="#000"/><rect x="7" y="475" width="1" height="1" fill="#000"/><text transform="translate(10.5,483.2) rotate(-90)" text-anchor="middle">15</text><rect x="7" y="489" width="1" height="1" fill="#000"/><rect x="5" y="496" width="5" height="1" fill="#000"/><rect x="7" y="504" width="1" height="1" fill="#000"/><text transform="translate(10.5,511.6) rotate(-90)" text-anchor="middle">16</text><rect x="7" y="518" width="1" height="1" fill="#000"/><rect x="5" y="525" width="5" height="1" fill="#000"/><rect x="7" y="532" width="1" height="1" fill="#000"/><text transform="translate(10.5,540.0) rotate(-90)" text-anchor="middle">17</text><rect x="7" y="546" width="1" height="1" fill="#000"/><rect x="5" y="553" width="5" height="1" fill="#000"/><rect x="7" y="560" width="1" height="1" fill="#000"/></g></svg>
<div class="t serif" style="left:683px;top:244px;font-size:14px;line-height:16px;height:16px;"><b>и.</b></div>
<div class="t serif" style="left:680px;top:276px;font-size:14px;line-height:16px;height:16px;"><b>е Форматы</b>.</div>
<div class="t serif" style="left:686px;top:308px;font-size:14px;line-height:16px;height:16px;">вставки оглавления.</div>
<div class="t serif" style="left:683px;top:324px;font-size:14px;line-height:16px;height:16px;"><b>и.</b></div>
<div class="t serif" style="left:683px;top:340px;font-size:14px;line-height:16px;height:16px;">найдите стиль, которым в</div>
<div class="t serif" style="left:680px;top:372px;font-size:14px;line-height:16px;height:16px;">о уровня, который будет</div>
<div class="track" style="left:1006px;top:97px;width:16px;height:604px;"></div>
<div class="sb" style="left:1006px;top:97px;width:16px;height:6px;"></div>
<div class="sb" style="left:1006px;top:103px;width:16px;height:16px;"></div>
<svg style="left:1006px;top:103px" width="16" height="16" viewBox="0 0 16 16"><path d="M4 10h7l-3.5-4z" fill="#000"/></svg>
<div class="sb" style="left:1006px;top:555px;width:16px;height:81px;"></div>
<div class="sb" style="left:1006px;top:636px;width:16px;height:16px;"></div>
<svg style="left:1006px;top:636px" width="16" height="16" viewBox="0 0 16 16"><path d="M4 6h7l-3.5 4z" fill="#000"/></svg>
<div class="a" style="left:1006px;top:652px;width:16px;height:49px;background:#D4D0C8"></div>
<svg style="left:1006px;top:652px" width="16" height="49" viewBox="0 0 16 49"><path d="M5 8h6l-3-3z M5 12h6l-3-3z" fill="#000"/><circle cx="8" cy="24.500" r="3" fill="#909090" stroke="#303030"/><circle cx="7" cy="23.500" r="1" fill="#E8E8E8"/><path d="M5 37h6l-3 3z M5 41h6l-3 3z" fill="#000"/></svg>
<div class="a" style="left:2px;top:701px;width:1020px;height:16px;background:#D4D0C8"></div>
<div class="track" style="left:66px;top:701px;width:923px;height:16px;"></div>
<div class="sb" style="left:66px;top:701px;width:16px;height:16px;"></div>
<svg style="left:66px;top:701px" width="16" height="16" viewBox="0 0 16 16"><path d="M9 4v7l-4-3.5z" fill="#000"/></svg>
<div class="sb" style="left:82px;top:701px;width:907px;height:16px;"></div>
<div class="sb" style="left:989px;top:701px;width:16px;height:16px;"></div>
<svg style="left:989px;top:701px" width="16" height="16" viewBox="0 0 16 16"><path d="M6 4v7l4-3.5z" fill="#000"/></svg>
<div class="a" style="left:34px;top:701px;width:16px;height:16px;background:#D5D6DB;border:1px solid #0A246A"></div>
<svg style="left:0px;top:701px" width="70" height="16" viewBox="0 0 70 16"><path d="M6 4.500h8M6 6.500h8M6 8.500h8M6 10.500h8" stroke="#000" stroke-width="1.200"/><rect x="22.500" y="4.500" width="6" height="5" fill="#fff" stroke="#000" stroke-width="1.400"/><circle cx="28" cy="9.500" r="2" fill="#2060C0" stroke="#103060" stroke-width=".5"/><path d="M27 9l1-1" stroke="#40C040" stroke-width="1"/><rect x="38.500" y="4.500" width="7" height="6" fill="#fff" stroke="#000" stroke-width="1.400"/><path d="M40 6.500h4M40 8.500h4" stroke="#000"/><path d="M54 4.500h2M57 4.500h5M56 6.500h2M59 6.500h3M56 8.500h2M59 8.500h3M54 10.500h2M57 10.500h5" stroke="#000" stroke-width="1.200"/></svg>
<!-- status bar -->
<div class="a" style="left:0px;top:719px;width:1024px;height:20px;background:#D4D0C8"></div>
<div class="pan" style="left:5px;width:194px"></div>
<div class="pan" style="left:204px;width:166px"></div>
<div class="pan" style="left:375px;width:27px"></div>
<div class="pan" style="left:407px;width:31px"></div>
<div class="pan" style="left:444px;width:27px"></div>
<div class="pan" style="left:477px;width:24px"></div>
<div class="pan" style="left:507px;width:65px"></div>
<div class="pan" style="left:577px;width:44px"></div>
<div class="pan" style="left:626px;width:38px"></div>
<div class="pan" style="left:669px;width:27px"></div>
<div class="st" style="left:10px;letter-spacing:0.158px;">Стр.&nbsp; 6</div>
<div class="st" style="left:77px;letter-spacing:-0.060px;">Разд&nbsp; 1</div>
<div class="st" style="left:159px;letter-spacing:0.234px;">6/6</div>
<div class="st" style="left:207px;letter-spacing:-0.084px;">На&nbsp; 11,5см</div>
<div class="st" style="left:268px;letter-spacing:-0.057px;">Ст&nbsp; 16</div>
<div class="st" style="left:313px;letter-spacing:0.010px;">Кол&nbsp; 1</div>
<div class="st" style="left:378px;color:#9A978E;letter-spacing:0.078px;">ЗАП</div>
<div class="st" style="left:409px;color:#9A978E;letter-spacing:-0.648px;">ИСПР</div>
<div class="st" style="left:446px;color:#9A978E;letter-spacing:-0.422px;">ВДЛ</div>
<div class="st" style="left:478px;color:#9A978E;letter-spacing:-0.552px;">ЗАМ</div>
<div class="st" style="left:509px;letter-spacing:-0.016px;">русский (Ро</div>
<svg style="left:587px;top:721px" width="24" height="15" viewBox="0 0 24 15"><path d="M1.500 3v9.500h7" fill="none" stroke="#000" stroke-width="1.600"/><path d="M3 1.500h4.500q1.500 0 1.500 1.500v8h-6z" fill="#fff" stroke="#000" stroke-width="1.200"/><path d="M4.500 4h3M4.500 6h3M4.500 8h3" stroke="#B0B0B0" stroke-width=".8"/><path d="M9.500 3h6.500v9.500h-7" fill="#fff" stroke="#000" stroke-width="1.200"/><path d="M8 13h9" stroke="#000" stroke-width="1.500"/><path d="M11 5h3M11 7h3M11 9h3" stroke="#B0B0B0" stroke-width=".8"/><path d="M13 4.500l8 7.500M20.500 3l-8 10" stroke="#8B0000" stroke-width="1.900"/></svg>
<!-- taskbar -->
<div class="a" style="left:0px;top:739px;width:1024px;height:1px;background:#fff"></div>
<div class="a" style="left:0px;top:740px;width:1024px;height:28px;background:#D4D0C8"></div>
<div class="btn" style="left:3px;top:742px;width:50px;height:22px;"></div>
<svg style="left:5px;top:745px" width="15" height="15" viewBox="0 0 15 15"><path d="M1 3q3-2 6 0v5q-3-2-6 0z" fill="#E8432D"/><path d="M8 3q3 2 6 0v5q-3 2-6 0z" fill="#6DB33F"/><path d="M1 9q3-2 6 0v5q-3-2-6 0z" fill="#2F74D0"/><path d="M8 9q3 2 6 0v5q-3 2-6 0z" fill="#F5B800"/></svg>
<div class="t" style="left:22px;top:747px;font-weight:bold;font-size:11px;width:27px">Пуск</div>
<svg style="left:61px;top:745px" width="16" height="16" viewBox="0 0 16 16"><rect x="0" y="1" width="12" height="13" fill="#1C3FA8"/><path d="M2 3l8 9" stroke="#9DB8FF" stroke-width="2"/><rect x="12" y="1" width="4" height="13" fill="#404040"/><rect x="13" y="3" width="2" height="2" fill="#D4D0C8"/><rect x="13" y="8" width="2" height="2" fill="#D4D0C8"/></svg>
<svg style="left:85px;top:745px" width="16" height="16" viewBox="0 0 16 16"><ellipse cx="8" cy="8" rx="8.500" ry="4" fill="none" stroke="#F0B428" stroke-width="1.400" transform="rotate(-32 8 8)"/><text x="8" y="14" font-family="Liberation Sans,sans-serif" font-weight="bold" font-size="18" fill="#2B7FE0" text-anchor="middle">e</text></svg>
<svg style="left:107px;top:745px" width="16" height="17" viewBox="0 0 16 17"><rect x="0" y="0" width="16" height="15" fill="#00A8E8"/><rect x="1" y="1" width="6" height="12" fill="#1030A0"/><rect x="9" y="1" width="6" height="12" fill="#1030A0"/><path d="M2 3h4M2 5h4M2 7h4M10 3h4M10 5h4M10 7h4" stroke="#F0E020"/><rect x="0" y="15" width="16" height="2" fill="#00D8C0"/></svg>
<svg style="left:135px;top:746px" width="9" height="7" viewBox="0 0 9 7"><path d="M0.500 0.500l3 2.500l-3 2.500M4.500 0.500l3 2.500l-3 2.500" stroke="#000" stroke-width="1.300" fill="none"/></svg>
<div class="btn" style="left:147px;top:743px;width:159px;height:20px"></div>
<div class="task" style="left:170px;width:132px;letter-spacing:0.107px;">Проигрыватель Windo...</div>
<div class="btn" style="left:310px;top:743px;width:159px;height:20px"></div>
<div class="task" style="left:334px;width:131px;">C:\Documents and Settin...</div>
<div class="a track" style="left:473px;top:743px;width:159px;height:20px;border:1px solid;border-color:#404040 #fff #fff #404040;box-shadow:inset 1px 1px #808080"></div>
<div class="task" style="left:498px;width:130px;font-weight:bold;top:745px;letter-spacing:0.257px;">информатика - Micro...</div>
<div class="btn" style="left:636px;top:743px;width:160px;height:20px"></div>
<div class="task" style="left:659px;width:133px;">Справка Microsoft Word</div>
<svg style="left:152px;top:745px" width="16" height="16" viewBox="0 0 16 16"><ellipse cx="8" cy="8" rx="7.500" ry="6.500" fill="#1A1A1A"/><ellipse cx="8" cy="8" rx="6" ry="3.500" fill="none" stroke="#3C7BE0" stroke-width="2"/><circle cx="8" cy="8" r="2" fill="#D4D0C8"/></svg>
<svg style="left:314px;top:745px" width="14" height="16" viewBox="0 0 14 16"><path d="M1 1l5 2v12l-5-2z" fill="#202020"/><path d="M6 3l5-1v12l-5 1z" fill="#48A8D8"/></svg>
<svg style="left:477px;top:745px" width="18" height="18" viewBox="0 0 18 18"><g transform="translate(-1,-1)"><path d="M6 1h7.500l3 3v12h-10.500z" fill="#fff"/><path d="M13.500 1l3 3h-3z" fill="#D4D0C8" stroke="#000" stroke-width=".6"/><path d="M17 4v12.500h-11" fill="none" stroke="#000" stroke-width="1.200"/><path d="M12 7h3M12 9h3M12 11h3M8 13h7" stroke="#B8B8B8" stroke-width=".8"/></g><rect x="1" y="2" width="10" height="10" fill="#0000E0"/><rect x="1" y="2" width="10" height="10" fill="none" stroke="#000" stroke-width="1" stroke-dasharray="1 1"/><rect x="2.200" y="3.200" width="7.600" height="7.600" fill="#fff"/><text x="6" y="10" font-family="Liberation Sans,sans-serif" font-weight="bold" font-size="8" fill="#000" text-anchor="middle">W</text></svg>
<svg style="left:640px;top:745px" width="17" height="17" viewBox="0 0 17 17"><rect x="5.500" y="0.500" width="10" height="10" fill="#FFFFB0" stroke="#000"/><path d="M11 10.500l3 4v-4" fill="#FFFFB0" stroke="#000"/><text x="10.500" y="9" font-family="Liberation Sans,sans-serif" font-weight="bold" font-size="10" fill="#1030A0" text-anchor="middle">?</text><rect x="0" y="7" width="5" height="4" fill="#D03020" stroke="#000" stroke-width=".6"/><rect x="5" y="7" width="4" height="4" fill="#30A030" stroke="#000" stroke-width=".6"/><rect x="0" y="11" width="5" height="4" fill="#2050D0" stroke="#000" stroke-width=".6"/><rect x="5" y="11" width="4" height="4" fill="#E0C020" stroke="#000" stroke-width=".6"/></svg>
<div class="a" style="left:890px;top:746px;width:12px;height:16px;background:#0A246A"></div>
<div class="t" style="left:890px;top:748px;color:#fff;font-size:10px;width:12px;text-align:center;letter-spacing:-0.5px">RL</div>
<div class="a" style="left:906px;top:742px;width:116px;height:24px;border:1px solid;border-color:#808080 #fff #fff #808080"></div>
<svg style="left:909px;top:746px" width="16" height="16" viewBox="0 0 16 16"><path d="M1 5h3l4-4v14l-4-4h-3z" fill="#C8D0E0" stroke="#606878"/><path d="M10 5q2 3 0 6M12 3q3.500 5 0 10" fill="none" stroke="#30A050" stroke-width="1.200"/></svg>
<svg style="left:927px;top:745px" width="17" height="17" viewBox="0 0 17 17"><path d="M1 2q0-1 2-1h11q2 0 2 2q0 9-7 13h-6q-2 0-2-2z" fill="#1E7A4C"/><ellipse cx="8.500" cy="8" rx="6" ry="5" fill="#fff"/><circle cx="8.500" cy="8" r="4" fill="#58C838"/><circle cx="8.500" cy="8" r="1.500" fill="#1E7A4C"/></svg>
<svg style="left:945px;top:745px" width="16" height="17" viewBox="0 0 16 17"><path d="M9 4l4-3l2 2l-3 4z" fill="#E8E8E8" stroke="#808080" stroke-width=".7"/><path d="M11 3l-7 7l-2-2l-1 8l8-1l-2-2l7-7z" fill="#30C030" stroke="#108010" stroke-width=".7"/></svg>
<svg style="left:966px;top:745px" width="12" height="18" viewBox="0 0 12 18"><rect x="1" y="1.500" width="10" height="15" rx="2" fill="#fff" stroke="#000" stroke-width="1.500"/><rect x="3" y="0" width="6" height="2" fill="#000"/><rect x="3.500" y="4" width="5" height="5" fill="#108020"/><rect x="3.500" y="9" width="5" height="5" fill="#C0C0C0"/></svg>
<div class="t" style="left:985px;top:748px;font-size:11px;width:29px">15:14</div>
<!-- dialog -->
<div class="a" style="left:170px;top:151px;width:513px;height:383px;background:#D4D0C8;border:1px solid;border-color:#D4D0C8 #404040 #404040 #D4D0C8;box-shadow:inset 1px 1px #fff,inset -1px -1px #808080"></div>
<div class="a" style="left:173px;top:154px;width:507px;height:18px;background:linear-gradient(90deg,#0A246A,#A6CAF0)"></div>
<div class="t" style="left:175px;top:157px;color:#fff;font-weight:bold;font-size:11px;letter-spacing:0.386px;">Оглавление и указатели</div>
<div class="btn" style="left:644px;top:156px;width:16px;height:14px;"></div>
<div class="btn" style="left:662px;top:156px;width:16px;height:14px;"></div>
<div class="t" style="left:644px;top:157px;width:16px;text-align:center;font-weight:bold;font-size:12px">?</div>
<svg style="left:662px;top:156px" width="16" height="14" viewBox="0 0 16 14"><path d="M4.500 3.500l7 6M11.500 3.500l-7 6" stroke="#000" stroke-width="1.600" fill="none"/></svg>
<div class="a" style="left:179px;top:201px;width:495px;height:294px;border:1px solid;border-color:#fff #404040 #404040 #fff;box-shadow:inset -1px -1px #808080"></div>
<div class="a" style="left:182px;top:182px;width:70px;height:19px;background:#D4D0C8;border:1px solid;border-color:#fff #404040 transparent #fff;border-bottom:0;border-radius:3px 3px 0 0;box-shadow:inset -1px 0 #808080"></div>
<div class="t" style="left:188px;top:188px;letter-spacing:0.189px;"><u>У</u>казатель</div>
<div class="a" style="left:329px;top:182px;width:126px;height:19px;background:#D4D0C8;border:1px solid;border-color:#fff #404040 transparent #fff;border-bottom:0;border-radius:3px 3px 0 0;box-shadow:inset -1px 0 #808080"></div>
<div class="t" style="left:338px;top:188px;letter-spacing:-0.070px;">Список илл<u>ю</u>страций</div>
<div class="a" style="left:455px;top:182px;width:98px;height:19px;background:#D4D0C8;border:1px solid;border-color:#fff #404040 transparent #fff;border-bottom:0;border-radius:3px 3px 0 0;box-shadow:inset -1px 0 #808080"></div>
<div class="t" style="left:464px;top:188px;letter-spacing:-0.184px;">Таблица сс<u>ы</u>лок</div>
<div class="a" style="z-index:2;left:250px;top:180px;width:82px;height:23px;background:#D4D0C8;border:1px solid;border-color:#fff #404040 transparent #fff;border-bottom:0;border-radius:3px 3px 0 0;box-shadow:inset -1px 0 #808080"></div>
<div class="t" style="left:259px;top:186px;z-index:2;letter-spacing:-0.036px;">О<u>г</u>лавление</div>
<div class="t" style="left:185px;top:208px;letter-spacing:0.056px;"><u>О</u>бразец печатного документа</div>
<div class="t" style="left:436px;top:208px;letter-spacing:-0.033px;">Образец ве<u>б</u>-документа</div>
<div class="a" style="left:185px;top:222px;width:219px;height:120px;background:#fff;border:1px solid #000"></div>
<div class="a" style="left:436px;top:222px;width:212px;height:120px;background:#fff;border:1px solid #000"></div>
<div class="track" style="left:404px;top:222px;width:17px;height:120px;"></div>
<div class="sb" style="left:404px;top:222px;width:17px;height:16px;"></div>
<svg style="left:404px;top:222px" width="17" height="16" viewBox="0 0 17 16"><path d="M4.5 10h7l-3.500-4z" fill="#000"/></svg>
<div class="sb" style="left:404px;top:238px;width:17px;height:16px;"></div>
<div class="sb" style="left:404px;top:326px;width:17px;height:16px;"></div>
<svg style="left:404px;top:326px" width="17" height="16" viewBox="0 0 17 16"><path d="M4.5 6h7l-3.500 4z" fill="#000"/></svg>
<div class="track" style="left:649px;top:222px;width:16px;height:120px;"></div>
<div class="sb" style="left:649px;top:222px;width:16px;height:16px;"></div>
<svg style="left:649px;top:222px" width="16" height="16" viewBox="0 0 16 16"><path d="M4.0 10h7l-3.500-4z" fill="#000"/></svg>
<div class="sb" style="left:649px;top:238px;width:16px;height:16px;"></div>
<div class="sb" style="left:649px;top:326px;width:16px;height:16px;"></div>
<svg style="left:649px;top:326px" width="16" height="16" viewBox="0 0 16 16"><path d="M4.0 6h7l-3.500 4z" fill="#000"/></svg>
<div class="a serif" style="display:flex;left:188px;top:247px;width:207px;height:20px;line-height:20px;white-space:nowrap;font-size:15px;font-weight:bold;text-decoration:underline;text-decoration-thickness:1px;text-underline-offset:2px;"><span style="flex:none;letter-spacing:0.138px;">ЗАГОЛОВОК 1</span><span style="flex:1;overflow:hidden;direction:rtl;margin-right:0px">......................................................................</span><span style="flex:none">1</span></div>
<div class="a serif" style="display:flex;left:188px;top:290px;width:207px;height:20px;line-height:20px;white-space:nowrap;font-size:14px;font-weight:bold;"><span style="flex:none;letter-spacing:0.296px;">З<span style="font-size:12px">АГОЛОВОК</span>&nbsp;2&nbsp;</span><span style="flex:1;overflow:hidden;direction:rtl;margin-right:1px">......................................................................</span><span style="flex:none">3</span></div>
<div class="a serif" style="display:flex;left:188px;top:306px;width:207px;height:20px;line-height:20px;white-space:nowrap;font-size:14px;"><span style="flex:none;letter-spacing:0.239px;">З<span style="font-size:12px">АГОЛОВОК</span>&nbsp;3</span><span style="flex:1;overflow:hidden;direction:rtl;margin-right:5px">......................................................................</span><span style="flex:none">5</span></div>
<div class="a serif" style="display:flex;left:188px;top:323px;width:207px;height:20px;line-height:20px;white-space:nowrap;font-size:14px;"><span style="flex:none;letter-spacing:0.250px;">Заголовок 4</span><span style="flex:1;overflow:hidden;direction:rtl;margin-right:5px">......................................................................</span><span style="flex:none">7</span></div>
<div class="a serif" style="display:flex;left:439px;top:246px;height:20px;line-height:20px;white-space:nowrap;font-size:15px;color:#0000FF;text-decoration:underline;text-decoration-thickness:1px;text-underline-offset:2px;font-weight:bold;"><span style="flex:none;letter-spacing:0.411px;">ЗАГОЛОВОК 1</span></div>
<div class="a serif" style="display:flex;left:439px;top:288px;height:20px;line-height:20px;white-space:nowrap;font-size:14px;color:#0000FF;text-decoration:underline;text-decoration-thickness:1px;text-underline-offset:2px;font-weight:bold;"><span style="flex:none;letter-spacing:0.368px;">З<span style="font-size:12px">АГОЛОВОК</span>&nbsp;2</span></div>
<div class="a serif" style="display:flex;left:439px;top:304px;height:20px;line-height:20px;white-space:nowrap;font-size:14px;color:#0000FF;text-decoration:underline;text-decoration-thickness:1px;text-underline-offset:2px;"><span style="flex:none;letter-spacing:0.239px;">З<span style="font-size:12px">АГОЛОВОК</span>&nbsp;3</span></div>
<div class="a serif" style="display:flex;left:439px;top:321px;height:20px;line-height:20px;white-space:nowrap;font-size:14px;color:#0000FF;text-decoration:underline;text-decoration-thickness:1px;text-underline-offset:2px;"><span style="flex:none;letter-spacing:0.341px;">Заголовок 4</span></div>
<div class="a" style="left:427px;top:208px;width:1px;height:207px;background:#808080"></div>
<div class="a" style="left:428px;top:208px;width:1px;height:207px;background:#fff"></div>
<div class="sunk" style="left:194px;top:351px;width:13px;height:13px;"></div>
<svg style="left:194px;top:351px" width="13" height="13" viewBox="0 0 13 13"><path d="M3 5v3l2 2l4-4v-3l-4 4z" fill="#000"/></svg>
<div class="t" style="left:211px;top:352px;letter-spacing:-0.099px;">Показать но<u>м</u>ера страниц</div>
<div class="sunk" style="left:194px;top:374px;width:13px;height:13px;"></div>
<svg style="left:194px;top:374px" width="13" height="13" viewBox="0 0 13 13"><path d="M3 5v3l2 2l4-4v-3l-4 4z" fill="#000"/></svg>
<div class="t" style="left:211px;top:375px;letter-spacing:-0.136px;"><u>Н</u>омера страниц по правому краю</div>
<div class="sunk" style="left:445px;top:351px;width:13px;height:13px;"></div>
<svg style="left:445px;top:351px" width="13" height="13" viewBox="0 0 13 13"><path d="M3 5v3l2 2l4-4v-3l-4 4z" fill="#000"/></svg>
<div class="t" style="left:462px;top:352px;letter-spacing:-0.127px;">Гип<u>е</u>рссылки вместо номеров страниц</div>
<div class="t" style="left:193px;top:401px;letter-spacing:0.073px;"><u>З</u>аполнитель:</div>
<div class="sunk" style="left:275px;top:396px;width:74px;height:21px;"></div>
<div class="btn" style="left:331px;top:398px;width:16px;height:17px;"></div>
<svg style="left:331px;top:398px" width="16" height="17" viewBox="0 0 16 17"><path d="M4 6.5h7l-3.500 4z" fill="#000"/></svg>
<div class="t" style="left:279px;top:401px;letter-spacing:0.799px;">.......</div>
<div class="t" style="left:185px;top:422px;letter-spacing:-0.434px;">Общие</div>
<div class="a" style="left:226px;top:428px;width:439px;height:1px;background:#808080"></div>
<div class="a" style="left:226px;top:429px;width:439px;height:1px;background:#fff"></div>
<div class="t" style="left:193px;top:442px;letter-spacing:-0.133px;"><u>Ф</u>орматы:</div>
<div class="sunk" style="left:251px;top:436px;width:98px;height:21px;"></div>
<div class="btn" style="left:331px;top:438px;width:16px;height:17px;"></div>
<svg style="left:331px;top:438px" width="16" height="17" viewBox="0 0 16 17"><path d="M4 6.5h7l-3.500 4z" fill="#000"/></svg>
<div class="t" style="left:255px;top:441px;letter-spacing:-0.261px;">Из шаблона</div>
<div class="t" style="left:368px;top:439px;letter-spacing:0.020px;">Уро<u>в</u>ни:</div>
<div class="sunk" style="left:434px;top:436px;width:74px;height:20px;"></div>
<div class="a" style="left:437px;top:438px;width:8px;height:5px;overflow:hidden"><div class="t" style="left:1px;top:-5px;font-size:11px">3</div></div>
<div class="a" style="left:437px;top:446px;width:8px;height:7px;overflow:hidden"><div class="t" style="left:1px;top:-2px;font-size:11px">3</div></div>
<div class="btn" style="left:491px;top:438px;width:15px;height:8px;"></div>
<div class="btn" style="left:491px;top:446px;width:15px;height:8px;"></div>
<svg style="left:491px;top:438px" width="15" height="16" viewBox="0 0 15 16"><path d="M4.500 5.500h6l-3-3z M4.500 9.500h6l-3 3z" fill="#000"/></svg>
<div class="btn" style="left:189px;top:465px;width:140px;height:22px;"></div>
<div class="t" style="left:211px;top:470px;letter-spacing:0.150px;"><u>П</u>анель структуры</div>
<div class="btn" style="left:486px;top:465px;width:98px;height:22px;"></div>
<div class="t" style="left:499px;top:470px;letter-spacing:0.099px;">П<u>а</u>раметры...</div>
<div class="btn" style="left:591px;top:465px;width:74px;height:22px;"></div>
<div class="t" style="left:597px;top:470px;letter-spacing:0.018px;"><u>И</u>зменить...</div>
<div class="a" style="left:518px;top:501px;width:75px;height:23px;background:#000"></div>
<div class="btn" style="left:519px;top:502px;width:73px;height:21px;"></div>
<div class="t" style="left:548px;top:506px;letter-spacing:-0.484px;">ОК</div>
<div class="btn" style="left:600px;top:502px;width:74px;height:22px;"></div>
<div class="t" style="left:616px;top:507px;letter-spacing:-0.078px;">Отмена</div>
<!-- office assistant cat -->
<svg style="left:836px;top:4px" width="96" height="78" viewBox="0 0 96 78">
<g stroke-linejoin="round" stroke-linecap="round">
<path d="M65 61 C62 52 61.500 44 64 37 C66 30 72 26.500 80 25.500 C86 25 89.500 27.500 88.500 31 C87.500 35 81 36.500 75 38.500 C70.500 41 69.500 46 69.500 52 C69.500 57 69 60 66.500 62.500 Z" fill="#FFCC66" stroke="#000" stroke-width="1.300"/>
<path d="M43.500 45 C41 50 39 54 37.500 58 C34 60 32 63 32.500 66 C35 68 38 67.500 39.500 69 C41 71.500 45 71.500 47 70 C49 71.500 53 71.500 54.500 69.500 C57 69 58.500 67.500 59 66 C62 67 65.500 66 66 63.500 C66 59 64 55.500 61.500 54.500 C58.500 54.500 56 56 54.500 57.500 C53 53 51 48.500 50 44.500 Z" fill="#FFCC66" stroke="#000" stroke-width="1.300"/>
<path d="M43 50.500 C45.500 51.500 47.500 54 47.600 61.500 C44.500 59 42.500 55.500 43 50.500 Z" fill="#fff" stroke="none"/>
<path d="M39.500 64 v4.500 M43.500 65 v5 M50.500 65 v5 M55 64.500 v4 M60 62.500 v3.500 M36 62.500 v4" stroke="#000" stroke-width="1" fill="none"/>
<path d="M47 57 L48.500 66" stroke="#000" stroke-width="1" fill="none"/>
<circle cx="47.300" cy="44.800" r="2.200" fill="#20B8C8" stroke="#0A7080" stroke-width=".6"/>
<path d="M13 19 L29.500 20.500 C36 18.500 43 16.500 49 15 L66.500 6 L68 20 C69 24 67.500 27.500 65 30.500 C62 35 58 38.500 52 41 C46 43.500 36 43.500 28 42 C22 41 17.500 39.500 17 36.500 C17 34 18 32 18.800 30.500 Z" fill="#FFCC66" stroke="#000" stroke-width="1.400"/>
<path d="M14 20.300 L24.400 24.400 L18.800 30 Z" fill="#F04010" stroke="#000" stroke-width=".8"/>
<path d="M56.400 15.500 L66.300 7.500 L66.600 17.800 Z" fill="#D83010" stroke="#000" stroke-width=".8"/>
<path d="M32 32 C35 29 41 27.200 46.700 27.800 C45.500 31 43 34.500 40.600 35.600 C37.500 35.500 34 34.500 32 32 Z" fill="#000" stroke="#000" stroke-width=".8"/>
<path d="M40.600 35.600 C42 39.500 46 40 49 37.500 C50.500 36 51 33.500 50 31.500" fill="none" stroke="#000" stroke-width="1.100"/>
<path d="M18 35 C23 34.500 29 35 33 37 M35 37.500 C37 39 39.500 40 42 40" fill="none" stroke="#000" stroke-width="1"/>
<path d="M50 30.500 C55 27.500 61 25 67 23 M52 33 C57 31.500 62 29 66 26.500" fill="none" stroke="#000" stroke-width="1"/>
<path d="M37 20.500 v2 M40.500 19.500 v2" stroke="#000" stroke-width="1" fill="none"/>
<path d="M33 16.500 L34 19 M43.500 12.500 L47 15" stroke="#000" stroke-width="1" fill="none"/>
<path d="M17 35 L7 37.500 M18 39.500 L7 46.500 M67 21.500 L79 18" stroke="#000" stroke-width="1" fill="none"/>
</g></svg>
</body>
</html>
